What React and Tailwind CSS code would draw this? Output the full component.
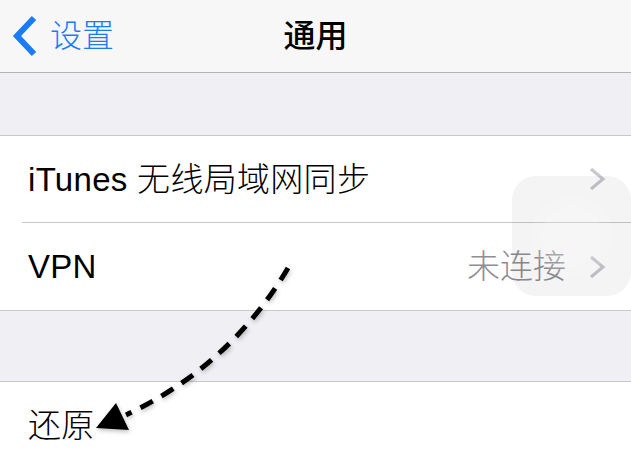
import React from "react";

const FONT = "font-['Liberation_Sans','Noto_Sans_CJK_SC',sans-serif]";

function Chevron() {
  return (
    <svg width="18" height="24" viewBox="0 0 18 24" className="shrink-0">
      <polyline points="3,2 15,12 3,22" fill="none" stroke="#c7c7cc" strokeWidth="3" strokeLinecap="butt" strokeLinejoin="miter" />
    </svg>
  );
}

function BackChevron() {
  return (
    <svg width="26" height="42" viewBox="0 0 26 42" className="shrink-0">
      <polyline points="22,3 5,21 22,39" fill="none" stroke="#1a7cf5" strokeWidth="6" strokeLinecap="butt" strokeLinejoin="miter" />
    </svg>
  );
}

function Row({ label, detail, chevron, divider, height }) {
  return (
    <div className="pl-[22px] bg-white">
      <div className={`${height} flex items-center pl-[6px] pr-[25px] ${divider ? "border-b border-[#c8c7cc]" : ""}`}>
        <span className="flex-1 text-[33px] leading-none font-light tracking-[0.3px] text-black">{label}</span>
        {detail && <span className="text-[33px] leading-none font-light text-[#8e8e93] mr-[22px]">{detail}</span>}
        {chevron && <Chevron />}
      </div>
    </div>
  );
}

// Dashed curve ending in an arrowhead, drawn over the list
function DashedArrow() {
  return (
    <svg className="absolute inset-0 pointer-events-none" width="631" height="463" viewBox="0 0 631 463">
      <defs>
        <filter id="soft" x="-20%" y="-20%" width="140%" height="140%">
          <feDropShadow dx="1" dy="2" stdDeviation="2" floodColor="#000" floodOpacity="0.25" />
        </filter>
      </defs>
      <g filter="url(#soft)">
        <path d="M288 268 Q230 366 126 415" fill="none" stroke="#000" strokeWidth="5" strokeDasharray="14 10" />
        <polygon points="96,428 116,403 129,430" fill="#000" />
      </g>
    </svg>
  );
}

export default function App() {
  return (
    <div className={`relative w-[631px] h-[463px] overflow-hidden bg-white ${FONT}`}>
      <header className="h-[73px] bg-[#f7f7f8] border-b border-[#b2b2b2] grid grid-cols-[1fr_auto_1fr] items-center">
        <div className="flex items-center pl-[12px] gap-[12px]">
          <BackChevron />
          <span className="text-[32px] leading-none font-light text-[#1a7cf5]">设置</span>
        </div>
        <h1 className="text-[32px] leading-none font-medium text-black">通用</h1>
        <div />
      </header>

      <div className="h-[63px] bg-[#efeff4] border-b border-[#c8c7cc]" />

      <Row label="iTunes 无线局域网同步" chevron divider height="h-[87px]" />
      <div className="border-b border-[#c8c7cc]">
        <Row label="VPN" detail="未连接" chevron height="h-[87px]" />
      </div>

      <div className="h-[71px] bg-[#efeff4] border-b border-[#c8c7cc]" />

      <Row label="还原" height="h-[86px]" />

      {/* floating assistive touch button */}
      <div className="absolute left-[512px] top-[176px] w-[119px] h-[120px] rounded-[24px] bg-black/[0.045] flex items-center justify-center">
        <div className="w-[80px] h-[80px] rounded-full bg-white/15 flex items-center justify-center">
          <div className="w-[60px] h-[60px] rounded-full bg-white/15" />
        </div>
      </div>

      <DashedArrow />
    </div>
  );
}
